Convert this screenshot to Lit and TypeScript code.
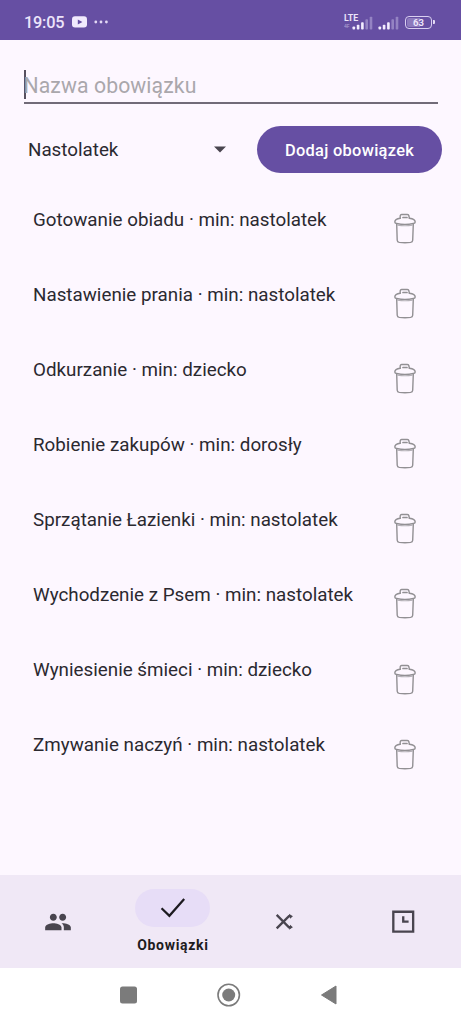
import { LitElement, html, svg, css } from "lit";
import { customElement, property, state } from "lit/decorators.js";
import { classMap } from "lit/directives/class-map.js";

@customElement("status-bar")
class StatusBar extends LitElement {
  static styles = css`
    :host { display: flex; box-sizing: border-box; height: 40px; padding: 4px 26px 0 24px; background: #664fa3; color: #ece4fa; align-items: center; }
    .time { font-size: 16.3px; font-weight: 500; line-height: 20px; width: 48px; padding-top: 1px; letter-spacing: -.2px; }
    .grow { flex: 1; }
    svg { display: block; flex: none; }
    .net { display: flex; align-items: flex-end; }
    .lte { display: flex; flex-direction: column; width: 15px; height: 16px; margin-right: -7px; font-size: 8.8px; line-height: 8px; font-weight: 700; }
    .sub { font-size: 5px; line-height: 8px; font-weight: 400; opacity: .55; }
    .second { margin-left: 5px; }
    .battery { display: flex; align-items: center; margin-left: 6px; }
    .cell { box-sizing: border-box; width: 27px; height: 13px; border: 1.5px solid #d9cff0; border-radius: 4px; font-size: 9.5px; font-weight: 700; text-align: center; background: linear-gradient(90deg, #8d7abd 0 58%, transparent 58%) content-box; padding: 1px; line-height: 9px; }
    .tip { width: 2px; height: 4px; margin-left: 1px; background: #e4dbf5; border-radius: 0 1px 1px 0; }
  `;
  bars() {
    return html`<svg width="21" height="14" viewBox="0 0 21 14">
      ${[3, 4.8, 7.2, 10.2, 12.8].map((h, i) => svg`<rect x=${0.5 + i * 4.3} y=${13.5 - h} width="2.6" height=${h} rx=".8" fill=${i < 3 ? "#f3edff" : "#9483c3"} />`)}
    </svg>`;
  }
  render() {
    return html`
      <span class="time">19:05</span>
      <svg width="38" height="12" viewBox="0 0 38 12">
        <rect x="0" y=".3" width="15" height="11.2" rx="3" fill="#f1eafd" />
        <path d="M5.8 3.4 10.4 5.9 5.8 8.4Z" fill="#664fa3" />
        <g fill="#e3d9f5"><circle cx="23.8" cy="6" r="1.4" /><circle cx="29" cy="6" r="1.4" /><circle cx="34.4" cy="6" r="1.4" /></g>
      </svg>
      <span class="grow"></span>
      <div class="net">
        <div class="lte"><span>LTE</span><span class="sub">4F</span></div>
        ${this.bars()}
        <div class="second">${this.bars()}</div>
      </div>
      <div class="battery"><div class="cell">63</div><div class="tip"></div></div>
    `;
  }
}

@customElement("chore-row")
class ChoreRow extends LitElement {
  @property() name = "";
  @property() level = "";
  static styles = css`
    :host { display: flex; height: 75.1px; padding: 0 43px 0 33px; box-sizing: border-box; justify-content: space-between; align-items: flex-start; }
    .label { font-size: 18.8px; line-height: 24px; padding-top: 8px; color: #2b2930; white-space: nowrap; letter-spacing: .01px; }
    svg { display: block; margin-top: 13.4px; flex: none; }
  `;
  render() {
    return html`
      <span class="label">${this.name} · min: ${this.level}</span>
      <svg width="26" height="32" viewBox="0 0 26 32" fill="none" stroke="#929094" stroke-width="1.4" stroke-linejoin="round" stroke-linecap="round">
        <path d="M8.200 5.300V3Q8.200 1.500 9.700 1.500H15.300Q16.800 1.500 16.900 3L17.400 5.300" />
        <path stroke-width="1.700" d="M11 4.500H15" />
        <path d="M8.200 5.300Q2.900 5.900 2.800 9Q2.800 10.100 4.600 10.500Q13 12.300 21.400 10.500Q23.200 10.100 23.200 9Q23.100 5.900 17.400 5.300" />
        <path d="M4.700 11.200 5.200 27.200Q5.300 29.100 7.300 29.400Q13 30.100 18.600 29.400Q20.600 29.100 20.700 27.200L21.300 11.200" />
        <path stroke="#b4b1b7" stroke-width="1.100" d="M5.600 12.100Q13 13.300 20.400 12.100" />
      </svg>
    `;
  }
}

@customElement("nav-bar")
class NavBar extends LitElement {
  @state() active = 1;
  static styles = css`
    :host { display: grid; grid-template-columns: repeat(4, 1fr); height: 93px; background: #f0e8f6; color: #49454f; }
    .item { display: flex; flex-direction: column; align-items: center; padding-top: 28px; cursor: pointer; }
    .item.active { padding-top: 14px; color: #1d1b20; }
    .pill { display: flex; align-items: center; justify-content: center; width: 75px; height: 38px; border-radius: 19px; }
    .active .pill { background: #e7ddf7; }
    .label { margin-top: 8px; font-size: 14px; line-height: 20px; font-weight: 700; letter-spacing: .68px; }
    svg { display: block; }
  `;
  icons = [
    svg`<path fill="currentColor" d="M16 11c1.66 0 2.99-1.34 2.99-3S17.66 5 16 5s-3 1.34-3 3 1.34 3 3 3zm-8 0c1.66 0 2.99-1.34 2.99-3S9.66 5 8 5 5 6.34 5 8s1.34 3 3 3zm0 2c-2.33 0-7 1.17-7 3.5V19h14v-2.5c0-2.33-4.67-3.5-7-3.5zm8 0c-.29 0-.62.02-.97.05 1.16.84 1.97 1.97 1.97 3.45V19h6v-2.5c0-2.33-4.67-3.5-7-3.5z" />`,
    svg`<path fill="none" stroke="currentColor" stroke-width="1.9" d="M2.2 12.2 8.9 18.7 21.6 4.2" />`,
    svg`<path fill="none" stroke="currentColor" stroke-width="2" d="M2.3 5.9 12.8 16.5H14.5M2.3 17.5 12.8 7H14.5" /><path fill="currentColor" d="M12.8 4.9 16.2 7 13.8 9.2ZM13.8 14.3 16.2 16.6 12.8 18.7Z" />`,
    svg`<path fill="none" stroke="currentColor" stroke-width="2" d="M3.7 3.2H20.7V20.2H3.7ZM12.2 7V11.7H16.800" />`,
  ];
  labels = ["", "Obowiązki", "", ""];
  render() {
    return this.icons.map((icon, i) => html`
      <div class=${classMap({ item: true, active: i === this.active })}>
        <div class="pill"><svg width="28" height="28" viewBox="0 0 24 24">${icon}</svg></div>
        ${i === this.active ? html`<span class="label">${this.labels[i]}</span>` : ""}
      </div>`);
  }
}

@customElement("app-root")
class AppRoot extends LitElement {
  @state() chores = [
    ["Gotowanie obiadu", "nastolatek"],
    ["Nastawienie prania", "nastolatek"],
    ["Odkurzanie", "dziecko"],
    ["Robienie zakupów", "dorosły"],
    ["Sprzątanie Łazienki", "nastolatek"],
    ["Wychodzenie z Psem", "nastolatek"],
    ["Wyniesienie śmieci", "dziecko"],
    ["Zmywanie naczyń", "nastolatek"],
  ];
  static styles = css`
    :host { display: flex; flex-direction: column; height: 1024px; background: #fdf7ff; font-family: Roboto, "Noto Sans", sans-serif; overflow: hidden; }
    main { flex: 1; min-height: 0; }
    .field { display: flex; align-items: center; box-sizing: border-box; height: 34px; margin: 30px 23.5px 0; border-bottom: 2px solid #716b78; }
    .caret { width: 2px; height: 29px; margin-right: -2px; margin-top: -3px; background: #57505f; }
    .hint { font-size: 21.2px; line-height: 30px; color: #aaa7ac; letter-spacing: .1px; }
    .controls { display: flex; align-items: center; height: 47px; margin: 22px 19px 0 28px; }
    .select { display: flex; flex: 1; align-items: center; justify-content: space-between; padding-right: 31px; font-size: 18.8px; color: #2b2930; }
    .add { border: 0; width: 185px; height: 47px; border-radius: 24px; background: #664fa3; color: #fff; font: 500 16.4px Roboto, sans-serif; letter-spacing: .3px; padding: 1px 0 0; }
    .list { margin-top: 26.6px; }
    .system { height: 56px; background: #fff; display: flex; justify-content: center; align-items: center; }
    svg { display: block; }
  `;
  render() {
    return html`
      <status-bar></status-bar>
      <main>
        <div class="field"><span class="caret"></span><span class="hint">Nazwa obowiązku</span></div>
        <div class="controls">
          <div class="select"><span>Nastolatek</span><svg width="12" height="7" viewBox="0 0 12 7"><path d="M0 .5H12L6 6.5Z" fill="#49454f" /></svg></div>
          <button class="add">Dodaj obowiązek</button>
        </div>
        <div class="list">${this.chores.map(([n, l]) => html`<chore-row .name=${n} .level=${l}></chore-row>`)}</div>
      </main>
      <nav-bar></nav-bar>
      <div class="system">
        <svg width="461" height="56" viewBox="0 0 461 56" fill="#7b7b7b">
          <rect x="120" y="18.5" width="17" height="17" rx="2.5" />
          <circle cx="228.7" cy="27" r="10.7" fill="none" stroke="#7b7b7b" stroke-width="1.6" /><circle cx="228.7" cy="27" r="6.5" />
          <path d="M321.5 27 336 18V36Z" stroke="#7b7b7b" stroke-width="1" stroke-linejoin="round" />
        </svg>
      </div>
    `;
  }
}
